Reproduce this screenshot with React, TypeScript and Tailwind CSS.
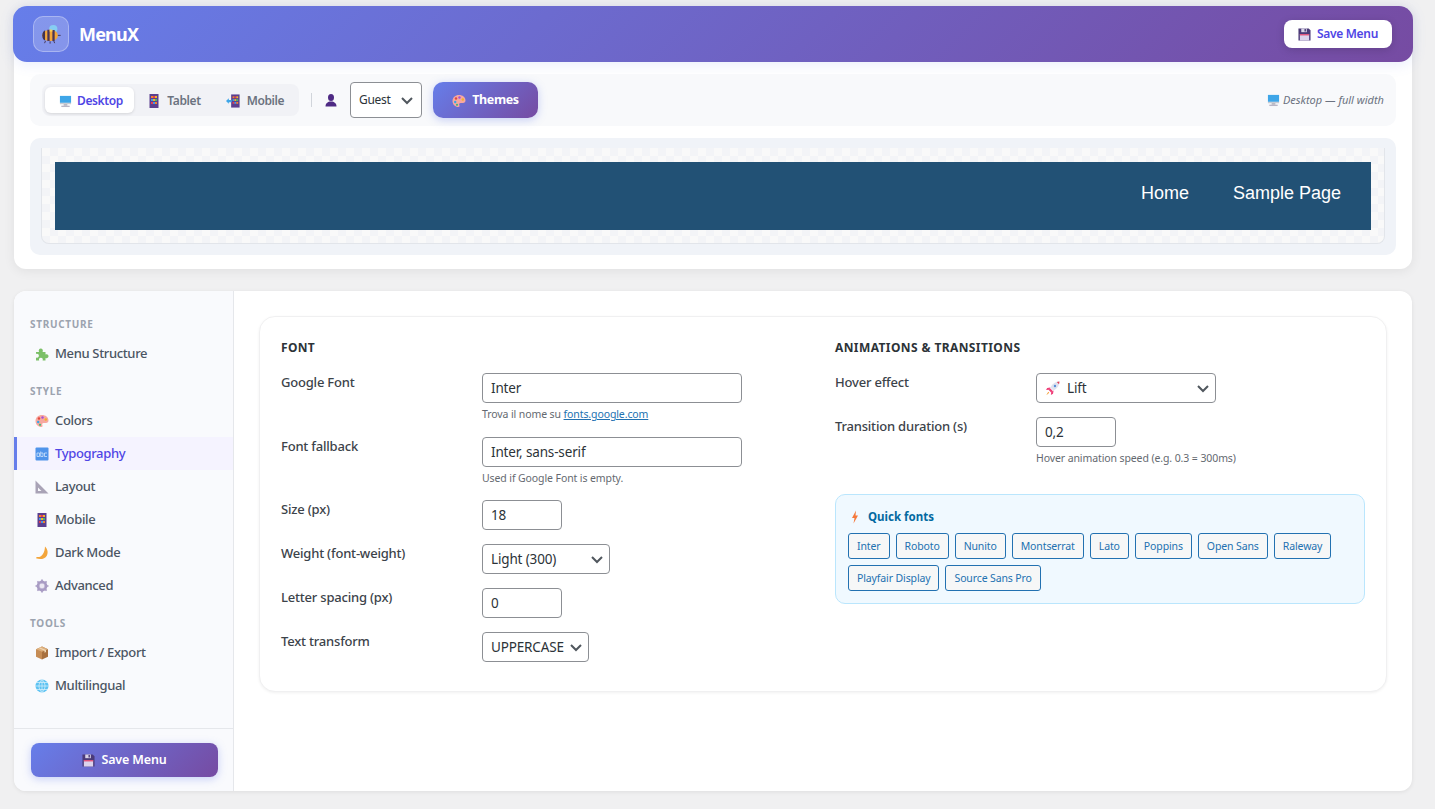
import type { ReactNode } from 'react';

const FONT = "font-['Noto_Sans','Open_Sans',sans-serif]";
const GRADIENT = 'bg-[linear-gradient(135deg,#667eea_0%,#764ba2_100%)]';

function BeeIcon() {
    return (
        <svg viewBox="0 0 24 24" className="w-[22px] h-[22px]">
            <ellipse cx="14.500" cy="6.500" rx="4.500" ry="4.200" fill="#86cdf3" />
            <ellipse cx="11" cy="13.500" rx="8.500" ry="6.200" fill="#f4a73a" />
            <path d="M2.500 13.500c0-3 1.500-5 3-5.700v11.400c-1.500-.7-3-2.700-3-5.700z" fill="#43324f" />
            <path d="M8 7.400h2.500v12.200H8zM13.500 7.500H16v12H13.500z" fill="#4a3558" />
            <path d="M10.500 7.300H13.500v2H10.500z" fill="#fbd25a" />
            <path d="M6 19.500l-1 2.500M11 20v2.500M15 19.500l1 2.500M19.500 13.500h3" stroke="#43324f" strokeWidth="1" fill="none" />
        </svg>
    );
}

function DesktopIcon({ className = 'w-[13px] h-[14px]' }: { className?: string }) {
    return (
        <svg viewBox="0 0 14 14" className={className}>
            <path d="M1 1.500h12v7.500H1z" fill="#3ea6e8" />
            <path d="M1 9h12v1.500H1z" fill="#c8ccd4" />
            <path d="M5 10.500h4V12H5z" fill="#a7a9b5" />
            <path d="M2.500 12h9v1.500h-9z" fill="#b9b6c6" />
        </svg>
    );
}

function PhoneGrid() {
    return (
        <>
            <path d="M2.500 0h9v14h-9z" fill="#5b3f8f" />
            <path d="M4 2h2v2H4z" fill="#f0822f" />
            <path d="M6 2h2v2H6z" fill="#e23c55" />
            <path d="M8 2h2v2H8z" fill="#f0b429" />
            <path d="M4 5h2v2H4z" fill="#3e9be6" />
            <path d="M6 5h2v2H6z" fill="#f0b429" />
            <path d="M8 5h2v2H8z" fill="#48b56a" />
            <path d="M4 8h2v2H4z" fill="#e23c55" />
            <path d="M6 8h2v2H6z" fill="#3e9be6" />
            <path d="M8 8h2v2H8z" fill="#f0822f" />
        </>
    );
}

function TabletIcon() {
    return (
        <svg viewBox="0 0 14 14" className="w-[14px] h-[14px]">
            <PhoneGrid />
        </svg>
    );
}

function MobileIcon() {
    return (
        <svg viewBox="0 0 16 14" className="w-[15px] h-[14px]">
            <g transform="translate(3 0)">
                <PhoneGrid />
            </g>
            <path d="M0 7l3-3v1.800h3v2.400H3V10z" fill="#3ea6e8" />
        </svg>
    );
}

function PersonIcon() {
    return (
        <svg viewBox="0 0 14 14" className="w-[14px] h-[14px]">
            <ellipse cx="7" cy="4.500" rx="3" ry="3.500" fill="#4e2a84" />
            <path d="M1.500 13.500c0-3.500 2.500-4.500 4-5h3c1.500.5 4 1.500 4 5z" fill="#4e2a84" />
        </svg>
    );
}

function PaletteIcon() {
    return (
        <svg viewBox="0 0 14 14" className="w-[14px] h-[14px]">
            <path d="M7 1C3.200 1 .5 3.600.5 7s2.700 6 5.800 6c1.300 0 1.500-1 1-2-.5-1.100.2-2 1.400-2h2.300c1.600 0 2.500-1 2.500-2.500C13.500 3.200 10.500 1 7 1z" fill="#f7a8a0" />
            <circle cx="4" cy="4.500" r="1.200" fill="#e2483d" />
            <circle cx="7.500" cy="3.500" r="1.200" fill="#a44fd6" />
            <circle cx="3.200" cy="8" r="1.200" fill="#35a6e8" />
            <circle cx="5" cy="10.800" r="1.100" fill="#3dbb78" />
            <circle cx="10.800" cy="5.500" r="1.200" fill="#f0b429" />
        </svg>
    );
}

function SaveIcon() {
    return (
        <svg viewBox="0 0 14 14" className="w-[13px] h-[13px]">
            <path d="M.5.500h11L13.500 2.500v11H.5z" fill="#4b3a78" />
            <path d="M3.500.500h6v4h-6z" fill="#d8d3e6" />
            <path d="M7 1.200h1.500v2.600H7z" fill="#4b3a78" />
            <path d="M2 6.500h10v7H2z" fill="#dcd2ec" />
            <path d="M2 6.500h10v1.500H2z" fill="#e0517a" />
        </svg>
    );
}

function PuzzleIcon() {
    return (
        <svg viewBox="0 0 14 14" className="w-[14px] h-[14px]">
            <path d="M1 5h3c-.8-2 .3-3.500 1.800-3.500S8.400 3 7.600 5h2.900v2.600c1.800-.7 3 .3 3 1.700s-1.200 2.400-3 1.700V13.500H7.600c.7-1.700-.2-2.800-1.700-2.800s-2.400 1.100-1.700 2.800H1v-3c1.700.7 2.900-.3 2.900-1.700S2.700 6.300 1 7z" fill="#7cc068" />
        </svg>
    );
}

function AbcIcon() {
    return (
        <svg viewBox="0 0 14 14" className="w-[14px] h-[14px]">
            <rect x="0.500" y="0.500" width="13" height="13" rx="1" fill="#4f94ea" />
            <path d="M2 6h2.500v3.500H2zM5.700 4.500v5h2.300V6H5.700M12 6H9.500v3.500H12" stroke="#cfe3fb" strokeWidth="0.800" fill="none" />
        </svg>
    );
}

function RulerIcon() {
    return (
        <svg viewBox="0 0 14 14" className="w-[14px] h-[14px]">
            <path d="M.5.500l13 13H.5zM3 7.500v3.500h3.500z" fill="#a9a3b6" fillRule="evenodd" />
        </svg>
    );
}

function MoonIcon() {
    return (
        <svg viewBox="0 0 14 14" className="w-[14px] h-[14px]">
            <path d="M10 .5c2.500 2.500 3.500 6 1.800 9.200-1.800 3-6.300 4.300-10.800 2.600 0-.6.300-1 1-1.300 4 .8 7.800-3.200 8-10.500z" fill="#f3a53c" />
        </svg>
    );
}

function GearIcon() {
    return (
        <svg viewBox="0 0 14 14" className="w-[14px] h-[14px]">
            <circle cx="7" cy="7" r="4.200" fill="none" stroke="#a99cc4" strokeWidth="2.400" />
            <path d="M7 .5v13M.5 7h13M2.400 2.400l9.200 9.200M11.600 2.400l-9.200 9.200" stroke="#a99cc4" strokeWidth="1.700" />
            <circle cx="7" cy="7" r="2.400" fill="#ece8f3" />
        </svg>
    );
}

function BoxIcon() {
    return (
        <svg viewBox="0 0 14 14" className="w-[14px] h-[14px]">
            <path d="M7 .5l6 2.700v7.600L7 13.500z" fill="#a8703f" />
            <path d="M7 .5L1 3.200v7.600l6 2.700z" fill="#c68c55" />
            <path d="M1 3.200l6 2.600 6-2.600L7 .5z" fill="#dcae7c" />
            <path d="M3.500 2.100l6 2.600v2l1.500-.7V3.900L5 1.400z" fill="#f0d7b4" />
        </svg>
    );
}

function GlobeIcon() {
    return (
        <svg viewBox="0 0 14 14" className="w-[14px] h-[14px]">
            <circle cx="7" cy="7" r="6.500" fill="#5cc2f2" />
            <path d="M.5 7h13M1.500 3.500h11M1.500 10.500h11M7 .5v13M7 .5C3 4 3 10 7 13.500M7 .5c4 3.500 4 9.500 0 13" stroke="#ddf2fc" strokeWidth="0.700" fill="none" />
        </svg>
    );
}

function BoltIcon() {
    return (
        <svg viewBox="0 0 10 14" className="w-[10px] h-[14px]">
            <path d="M6 .5L2 8h2.500L3.500 13.500 8 5.500H5.500z" fill="#f5793b" />
        </svg>
    );
}

function RocketIcon() {
    return (
        <svg viewBox="0 0 14 14" className="w-[15px] h-[15px]">
            <path d="M13.500.5c-3.500 0-6.500 1.800-8.500 5.500l3 3c3.700-2 5.500-5 5.500-8.500z" fill="#dfe3ee" />
            <path d="M5 6L2 6.500 1 8.500l3-.3zM8 9l-.5 3-2 1 .3-3z" fill="#ee3f78" />
            <path d="M4.500 6.500l3 3-2 1-2-2z" fill="#ee3f78" />
            <circle cx="9.300" cy="4.700" r="1.100" fill="#5b8fd8" />
            <path d="M13.500.5l-2.500.4 2.100 2.100z" fill="#e23c55" />
            <path d="M3 10l1 1-2.800 2.300z" fill="#f5a13b" />
        </svg>
    );
}

function Chevron({ className = 'w-[16px] h-[16px]' }: { className?: string }) {
    return (
        <svg viewBox="0 0 16 16" className={className}>
            <path d="M3 6l5 5 5-5" fill="none" stroke="#50575e" strokeWidth="2" />
        </svg>
    );
}

function Field({ label, children, hint, className = '' }: { label: string; children: ReactNode; hint?: ReactNode; className?: string }) {
    return (
        <div className={`flex items-start ${className}`}>
            <div className="w-[201px] shrink-0 text-[13px] leading-[18px] font-medium tracking-[-0.2px] text-[#3c434a]">{label}</div>
            <div>
                {children}
                {hint && <div className="mt-[4px] text-[10.5px] leading-[15px] tracking-[-0.1px] text-[#646970]">{hint}</div>}
            </div>
        </div>
    );
}

function TextInput({ value, width }: { value: string; width: string }) {
    return (
        <input
            readOnly
            value={value}
            className={`block ${width} h-[30px] px-[8px] bg-white border border-[#8c8f94] rounded-[4px] text-[13.500px] tracking-[-0.15px] text-[#2c3338] outline-none`}
        />
    );
}

function SelectBox({ children, width }: { children: ReactNode; width: string }) {
    return (
        <div className={`flex items-center justify-between ${width} h-[30px] pl-[8px] pr-[4px] bg-white border border-[#8c8f94] rounded-[4px] text-[13.500px] tracking-[-0.15px] text-[#2c3338]`}>
            <span className="flex items-center gap-[7px]">{children}</span>
            <Chevron />
        </div>
    );
}

function NavItem({ icon, label, active }: { icon: ReactNode; label: string; active?: boolean }) {
    return (
        <div className={`flex items-center h-[33px] gap-[6px] border-l-[3px] pl-[18px] text-[13px] font-medium tracking-[-0.35px] ${active ? 'border-[#667eea] bg-[#f5f3ff] text-[#4f46e5]' : 'border-transparent text-[#4b5563]'}`}>
            {icon}
            <span>{label}</span>
        </div>
    );
}

function SectionLabel({ children }: { children: string }) {
    return <div className="h-[16px] pl-[16px] mb-[5px] text-[10px] leading-[16px] font-bold tracking-[0.7px] uppercase text-[#9ca3af]">{children}</div>;
}

const quickFonts = ['Inter', 'Roboto', 'Nunito', 'Montserrat', 'Lato', 'Poppins', 'Open Sans', 'Raleway', 'Playfair Display', 'Source Sans Pro'];

export default function App() {
    return (
        <div className={`${FONT} min-h-[809px] bg-[#f0f0f1] pt-[6px] pl-[14px] pr-[23px]`}>
            <div className="bg-white rounded-[12px] shadow-[0_2px_12px_rgba(0,0,0,0.07)] pb-[14px]">
                <header className={`-mx-[1px] h-[56px] flex items-center justify-between pl-[20px] pr-[21px] rounded-[14px] shadow-[0_2px_14px_rgba(102,126,234,0.15)] ${GRADIENT}`}>
                    <div className="flex items-center gap-[10px]">
                        <div className="w-[36px] h-[36px] flex items-center justify-center rounded-[10px] bg-white/20 border border-white/30">
                            <BeeIcon />
                        </div>
                        <span className="text-[18px] font-bold text-white tracking-[-0.8px]">MenuX</span>
                    </div>
                    <button className="h-[28px] w-[108px] flex items-center justify-center gap-[6px] bg-white rounded-[8px] text-[12px] font-semibold tracking-[-0.3px] text-[#4f46e5] shadow-[0_2px_8px_rgba(0,0,0,0.15)]">
                        <SaveIcon />
                        Save Menu
                    </button>
                </header>

                <div className="mt-[12px] mx-[16px] h-[52px] flex items-center justify-between px-[12px] bg-[#f8f9fb] rounded-[10px]">
                    <div className="flex items-center">
                        <div className="flex items-center h-[32px] w-[257px] pl-[3px] bg-[#f1f2f6] rounded-[8px] text-[12px] font-semibold tracking-[-0.4px] text-[#6b7280]">
                            <div className="flex items-center gap-[5px] pl-[14px] pt-[1px] w-[89px] h-[26px] bg-white rounded-[6px] text-[#4f46e5] shadow-[0_1px_3px_rgba(0,0,0,0.12)]">
                                <DesktopIcon />
                                Desktop
                            </div>
                            <div className="flex items-center justify-center gap-[6px] pt-[1px] w-[80px] h-[26px]">
                                <TabletIcon />
                                Tablet
                            </div>
                            <div className="flex items-center justify-center gap-[6px] pt-[1px] w-[80px] h-[26px] ml-[1px]">
                                <MobileIcon />
                                Mobile
                            </div>
                        </div>
                        <span className="ml-[12px] h-[14px] w-[1px] bg-[#d1d5db]" />
                        <span className="ml-[12px]"><PersonIcon /></span>
                        <div className="ml-[12px] flex items-center justify-between w-[72px] h-[36px] pl-[8px] pr-[6px] bg-white border border-[#8c8f94] rounded-[4px] text-[12px] tracking-[-0.3px] text-[#2c3338]">
                            Guest
                            <Chevron />
                        </div>
                        <button className={`ml-[11px] w-[105px] h-[36px] pt-[1px] flex items-center justify-center gap-[6px] rounded-[10px] text-[12.500px] font-bold tracking-[-0.35px] text-white shadow-[0_2px_8px_rgba(102,126,234,0.35)] ${GRADIENT}`}>
                            <PaletteIcon />
                            Themes
                        </button>
                    </div>
                    <div className="flex items-center gap-[3px] text-[11px] italic text-[#6b7280]">
                        <DesktopIcon />
                        Desktop — full width
                    </div>
                </div>

                <div className="mt-[12px] mx-[16px] pt-[10px] px-[11px] pb-[11px] bg-[#f0f3f8] rounded-[10px]">
                    <div className="h-[96px] pt-[14px] pl-[13px] pr-[13px] bg-[repeating-conic-gradient(#f3f4f7_0_25%,#f9f9f9_0_50%)] bg-[length:16px_16px] border-x border-b border-[#e2e5ea] rounded-b-[8px]">
                        <nav className="h-[68px] pb-[6px] flex items-center justify-end gap-[44px] pr-[30px] bg-[#225175] font-['Liberation_Sans',sans-serif] text-[18px] text-white">
                            <span>Home</span>
                            <span>Sample Page</span>
                        </nav>
                    </div>
                </div>
            </div>

            <div className="mt-[22px] h-[500px] flex bg-white rounded-[12px] shadow-[0_1px_4px_rgba(0,0,0,0.08)] overflow-hidden">
                <aside className="w-[220px] shrink-0 flex flex-col bg-[#f9fafd] border-r border-[#e5e7eb]">
                    <div className="flex-1 pt-[25px]">
                        <SectionLabel>Structure</SectionLabel>
                        <NavItem icon={<PuzzleIcon />} label="Menu Structure" />
                        <div className="h-[13px]" />
                        <SectionLabel>Style</SectionLabel>
                        <NavItem icon={<PaletteIcon />} label="Colors" />
                        <NavItem icon={<AbcIcon />} label="Typography" active />
                        <NavItem icon={<RulerIcon />} label="Layout" />
                        <NavItem icon={<TabletIcon />} label="Mobile" />
                        <NavItem icon={<MoonIcon />} label="Dark Mode" />
                        <NavItem icon={<GearIcon />} label="Advanced" />
                        <div className="h-[13px]" />
                        <SectionLabel>Tools</SectionLabel>
                        <NavItem icon={<BoxIcon />} label="Import / Export" />
                        <NavItem icon={<GlobeIcon />} label="Multilingual" />
                    </div>
                    <div className="h-[63px] pt-[14px] pl-[17px] pr-[15px] border-t border-[#e5e7eb]">
                        <button className={`w-full h-[34px] pt-[1px] flex items-center justify-center gap-[6px] rounded-[8px] text-[12.500px] font-semibold tracking-[-0.15px] text-white shadow-[0_2px_8px_rgba(102,126,234,0.35)] ${GRADIENT}`}>
                            <SaveIcon />
                            Save Menu
                        </button>
                    </div>
                </aside>

                <main className="flex-1 pt-[25px] px-[25px]">
                    <div className="h-[376px] flex bg-white border border-[#f0f0f1] rounded-[16px] shadow-[0_1px_3px_rgba(0,0,0,0.06)] pt-[22px] pl-[21px] pr-[21px]">
                        <section className="w-[554px] shrink-0">
                            <h3 className="h-[18px] mb-[16px] text-[12px] leading-[18px] font-bold uppercase tracking-[0.3px] text-[#2c3338]">Font</h3>
                            <Field
                                label="Google Font"
                                hint={<>Trova il nome su <span className="text-[#2271b1] underline">fonts.google.com</span></>}
                            >
                                <TextInput value="Inter" width="w-[260px]" />
                            </Field>
                            <Field className="mt-[15px]" label="Font fallback" hint="Used if Google Font is empty.">
                                <TextInput value="Inter, sans-serif" width="w-[260px]" />
                            </Field>
                            <Field className="mt-[14px]" label="Size (px)">
                                <TextInput value="18" width="w-[80px]" />
                            </Field>
                            <Field className="mt-[14px]" label="Weight (font-weight)">
                                <SelectBox width="w-[128px]">Light (300)</SelectBox>
                            </Field>
                            <Field className="mt-[14px]" label="Letter spacing (px)">
                                <TextInput value="0" width="w-[80px]" />
                            </Field>
                            <Field className="mt-[14px]" label="Text transform">
                                <SelectBox width="w-[107px]">UPPERCASE</SelectBox>
                            </Field>
                        </section>
                        <section className="flex-1">
                            <h3 className="h-[18px] mb-[16px] text-[12px] leading-[18px] font-bold uppercase tracking-[0.4px] text-[#2c3338]">Animations &amp; Transitions</h3>
                            <Field label="Hover effect">
                                <SelectBox width="w-[180px]"><RocketIcon />Lift</SelectBox>
                            </Field>
                            <Field className="mt-[14px]" label="Transition duration (s)" hint="Hover animation speed (e.g. 0.3 = 300ms)">
                                <TextInput value="0,2" width="w-[80px]" />
                            </Field>
                            <div className="mt-[28px] h-[110px] pt-[13px] px-[12px] bg-[#f0f9ff] border border-[#bae6fd] rounded-[10px]">
                                <div className="flex items-center gap-[8px] h-[18px] pl-[2px] text-[11.500px] font-bold text-[#0369a1]">
                                    <BoltIcon />
                                    Quick fonts
                                </div>
                                <div className="mt-[7px] flex flex-wrap gap-x-[6px] gap-y-[6px]">
                                    {quickFonts.map((f) => (
                                        <button key={f} className="h-[26px] px-[8px] pt-[1px] bg-[#f6f7f7] border border-[#2271b1] rounded-[3px] text-[10.500px] tracking-[-0.12px] text-[#2271b1]">{f}</button>
                                    ))}
                                </div>
                            </div>
                        </section>
                    </div>
                </main>
            </div>
        </div>
    );
}
